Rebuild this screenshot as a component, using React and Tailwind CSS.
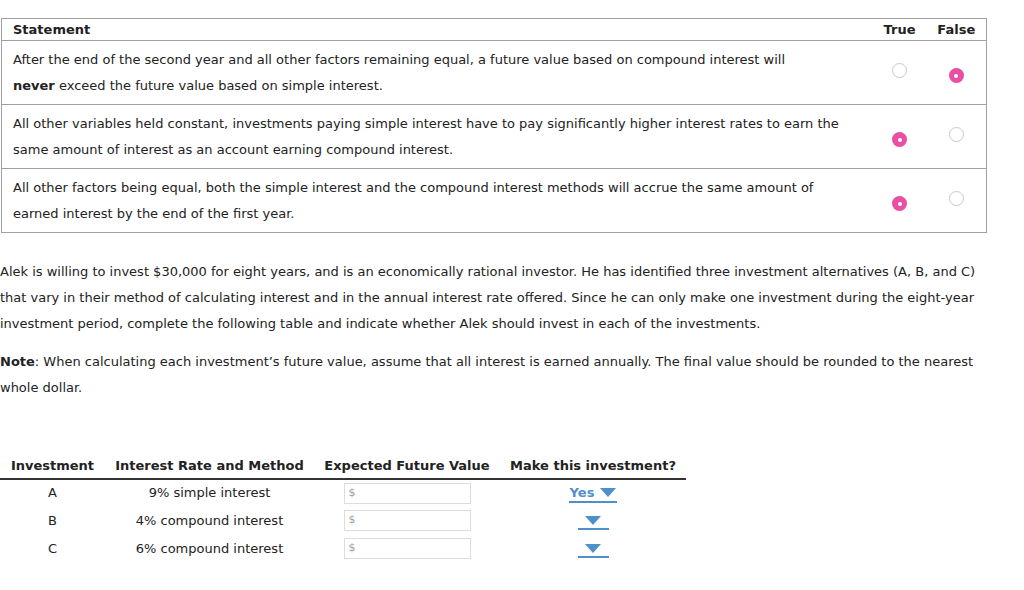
import React, { useState } from 'react';

const statements = [
  {
    text: (
      <>
        After the end of the second year and all other factors remaining equal, a future value based on compound interest will
        <br />
        <b>never</b> exceed the future value based on simple interest.
      </>
    ),
    answer: false,
  },
  {
    text: 'All other variables held constant, investments paying simple interest have to pay significantly higher interest rates to earn the same amount of interest as an account earning compound interest.',
    answer: true,
  },
  {
    text: 'All other factors being equal, both the simple interest and the compound interest methods will accrue the same amount of earned interest by the end of the first year.',
    answer: true,
  },
];

const investments = [
  { id: 'A', method: '9% simple interest', choice: 'Yes' },
  { id: 'B', method: '4% compound interest', choice: '' },
  { id: 'C', method: '6% compound interest', choice: '' },
];

const Radio = ({ checked }) =>
  checked ? (
    <span className="inline-flex w-[15px] h-[15px] rounded-full bg-[#ea4fa5] items-center justify-center">
      <span className="w-[4px] h-[4px] rounded-full bg-white" />
    </span>
  ) : (
    <span className="inline-block w-[15px] h-[15px] rounded-full border border-[#c8c8c8] bg-white" />
  );

const Caret = () => (
  <svg width="16" height="9" viewBox="0 0 16 9" className="inline-block">
    <path d="M0 0 L16 0 L8 9 Z" fill="#4f8fca" />
  </svg>
);

const App = () => {
  const [answers] = useState(statements.map(s => s.answer));

  return (
    <div className="bg-white min-h-[590px] text-[13px] text-[#222] font-['DejaVu_Sans','Verdana',sans-serif] pt-[18px]">
      {/* True / False table */}
      <table className="ml-[1px] w-[986px] border border-[#a0a0a0] border-collapse">
        <thead>
          <tr className="h-[22px] border-b border-[#a0a0a0]">
            <th className="text-left font-bold pl-[11px] leading-[20px]">Statement</th>
            <th className="w-[54px] font-bold text-center">True</th>
            <th className="w-[60px] font-bold text-center">False</th>
          </tr>
        </thead>
        <tbody>
          {statements.map((s, i) => (
            <tr key={i} className="h-[64px] border-b border-[#a0a0a0]">
              <td className="pl-[11px] pr-[24px] pt-[6px] pb-[5px] leading-[26px]">{s.text}</td>
              <td className="text-center align-middle pt-[2px]"><Radio checked={answers[i] === true} /></td>
              <td className="text-center align-middle pt-[2px]"><Radio checked={answers[i] === false} /></td>
            </tr>
          ))}
        </tbody>
      </table>

      <p className="mt-[26px] leading-[26px] pr-[30px]">
        Alek is willing to invest $30,000 for eight years, and is an economically rational investor. He has identified three investment alternatives (A, B, and C) that vary in their method of calculating interest and in the annual interest rate offered. Since he can only make one investment during the eight-year investment period, complete the following table and indicate whether Alek should invest in each of the investments.
      </p>
      <p className="mt-[12px] leading-[26px] pr-[30px]">
        <b>Note</b>: When calculating each investment’s future value, assume that all interest is earned annually. The final value should be rounded to the nearest whole dollar.
      </p>

      {/* Investment table */}
      <table className="mt-[53px] w-[686px] border-collapse">
        <thead>
          <tr className="border-b-2 border-[#333]">
            <th className="w-[105px] font-bold pt-[2px] pb-[2px] text-center">Investment</th>
            <th className="w-[209px] font-bold text-center">Interest Rate and Method</th>
            <th className="w-[186px] font-bold text-center">Expected Future Value</th>
            <th className="font-bold text-center">Make this investment?</th>
          </tr>
        </thead>
        <tbody>
          {investments.map(inv => (
            <tr key={inv.id} className="h-[28px]">
              <td className="text-center">{inv.id}</td>
              <td className="text-center">{inv.method}</td>
              <td className="text-center">
                <div className="mx-auto w-[127px] h-[21px] border border-[#dcdcdc] flex items-center pl-[4px] text-[11px] text-[#a0a0a0]">$</div>
              </td>
              <td className="text-center">
                <span className="inline-flex items-center justify-center gap-[6px] min-w-[31px] h-[18px] border-b-2 border-[#4f8fca] text-[#4f8fca] font-bold px-[1px]">
                  {inv.choice && <span>{inv.choice}</span>}
                  <Caret />
                </span>
              </td>
            </tr>
          ))}
        </tbody>
      </table>
    </div>
  );
};

export default App;
